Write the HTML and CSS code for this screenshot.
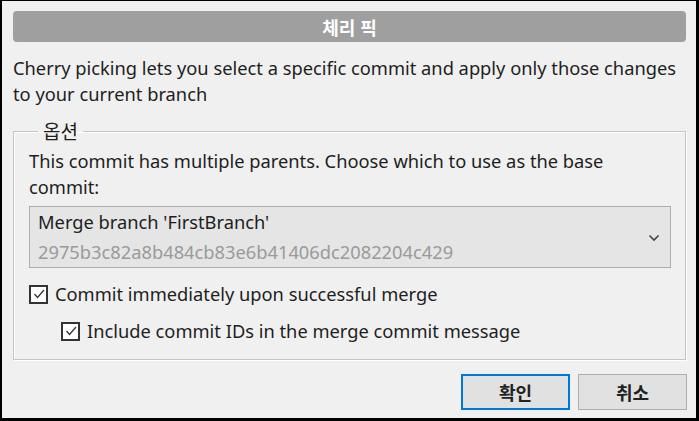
FILE: index.html
```html
<!DOCTYPE html>
<html lang="ko">
<head>
<meta charset="utf-8">
<link rel="stylesheet" href="styles.css">
</head>
<body>
<div class="dialog">
  <div class="titlebar">체리 픽</div>
  <p class="desc">Cherry picking lets you select a specific commit and apply only those changes to your current branch</p>
  <fieldset class="group">
    <legend class="legend">옵션</legend>
    <p class="group-text">This commit has multiple parents. Choose which to use as the base commit:</p>
    <div class="combo">
      <div class="combo-lines">
        <div class="combo-main">Merge branch 'FirstBranch'</div>
        <div class="combo-sub">2975b3c82a8b484cb83e6b41406dc2082204c429</div>
      </div>
      <svg class="chevron" width="12" height="8" viewBox="0 0 12 8"><polyline points="1.5,1.5 6,6 10.5,1.5" fill="none" stroke="#444" stroke-width="1.6"/></svg>
    </div>
    <label class="check">
      <span class="box"><svg width="14" height="14" viewBox="0 0 14 14"><polyline points="2.5,7 5.5,10.5 12,3" fill="none" stroke="#333" stroke-width="1.3"/></svg></span>
      <span>Commit immediately upon successful merge</span>
    </label>
    <label class="check sub">
      <span class="box"><svg width="14" height="14" viewBox="0 0 14 14"><polyline points="2.5,7 5.5,10.5 12,3" fill="none" stroke="#333" stroke-width="1.3"/></svg></span>
      <span>Include commit IDs in the merge commit message</span>
    </label>
  </fieldset>
  <div class="buttons">
    <button class="btn primary">확인</button>
    <button class="btn">취소</button>
  </div>
</div>
</body>
</html>
```

FILE: styles.css
```css
* { box-sizing: border-box; }
html, body { margin: 0; padding: 0; }
body {
  width: 699px;
  height: 421px;
  font-family: "Noto Sans", "Noto Sans CJK KR", sans-serif;
  font-size: 18.3px;
  color: #1e1e1e;
  background: #f0f0f0;
}
.dialog {
  width: 699px;
  height: 421px;
  border-style: solid;
  border-color: #000;
  border-width: 1px 3px 3px 2px;
  background: #f0f0f0;
  padding: 10px 9px 0 11px;
  display: flex;
  flex-direction: column;
}
.titlebar {
  height: 31px;
  margin-right: 1px;
  background: #9f9f9f;
  border-radius: 4px;
  color: #fff;
  font-weight: bold;
  font-size: 18px;
  display: flex;
  align-items: center;
  justify-content: center;
  font-family: "Noto Sans CJK KR", sans-serif;
}
.desc {
  margin: 13px 0 0 0;
  line-height: 26px;
}
.group {
  margin: 11px 1px 0 0;
  padding: 0 14px 0 15px;
  border: 1px solid #c5c5c5;
  box-shadow: inset 1px 1px 0 #fff, 1px 1px 0 #fff;
  height: 242px;
}
.legend {
  margin-left: 9px;
  padding: 0 5px;
  line-height: 26px;
  font-family: "Noto Sans CJK KR", sans-serif;
  font-size: 19px;
}
.group-text {
  margin: 4px 0 0 0;
  line-height: 26px;
}
.combo {
  margin-top: 6px;
  height: 62px;
  border: 1px solid #adadad;
  background: #e5e5e5;
  display: flex;
  align-items: center;
  padding: 0 10px 0 8px;
}
.combo-lines { flex: 1; line-height: 30px; }
.combo-main { color: #1e1e1e; }
.combo-sub { color: #9a9a9a; }
.chevron { margin-top: 2px; }
.check {
  display: flex;
  align-items: center;
  gap: 7px;
  margin-top: 15px;
  line-height: 22px;
}
.check.sub {
  margin-top: 15px;
  margin-left: 32px;
}
.box {
  width: 19px;
  height: 19px;
  border: 2px solid #333;
  background: #fff;
  display: flex;
  align-items: center;
  justify-content: center;
}
.buttons {
  display: flex;
  justify-content: flex-end;
  gap: 8px;
  margin-top: 14px;
}
.btn {
  width: 109px;
  height: 36px;
  font-family: "Noto Sans CJK KR", sans-serif;
  font-weight: bold;
  font-size: 18px;
  color: #222;
  background: #e1e1e1;
  border: 1px solid #adadad;
  padding: 0;
}
.btn.primary {
  border: 2px solid #0078d7;
}
```
